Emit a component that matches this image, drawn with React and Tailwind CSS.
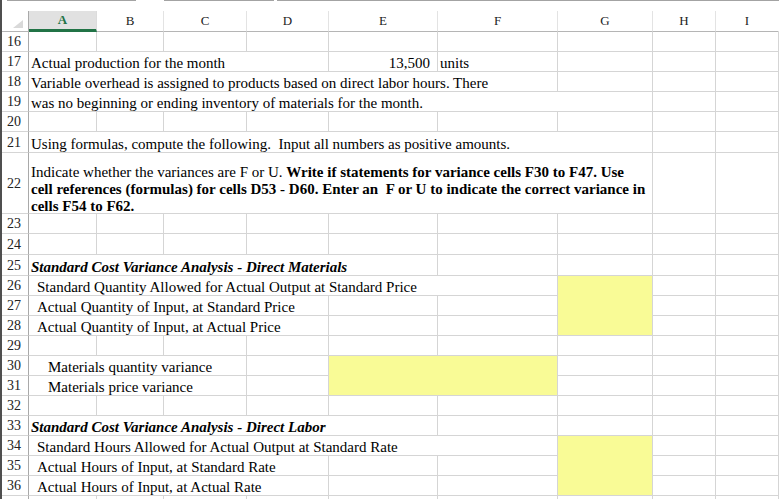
import React from "react";

const SPAN = {
  1: "",
  2: "col-span-2",
  3: "col-span-3",
  4: "col-span-4",
  5: "col-span-5",
  6: "col-span-6",
  7: "col-span-7",
};

function Cell({ span = 1, rows = 1, className = "", children }) {
  return (
    <div
      className={`${SPAN[span]} ${rows === 3 ? "row-span-3" : rows === 2 ? "row-span-2" : ""} border-r border-b border-[#d5d5d5] flex items-end min-w-0 overflow-visible whitespace-nowrap text-[15px] leading-[15px] text-black ${className}`}
    >
      {children}
    </div>
  );
}

function Label({ n }) {
  return (
    <div className="border-r border-b border-r-[#a9a9a9] border-b-[#d5d5d5] flex items-center pl-[5px] text-[14px] leading-[15px] text-[#222]">
      {n}
    </div>
  );
}

function Empties({ count }) {
  return Array.from({ length: count }).map((_, i) => <Cell key={i} />);
}

function EmptyRow({ n }) {
  return (
    <>
      <Label n={n} />
      <Empties count={9} />
    </>
  );
}

const Y = "bg-[#f9fb96]";

export default function App() {
  const headers = ["A", "B", "C", "D", "E", "F", "G", "H", "I"];
  return (
    <div className="flex w-[779px] h-[499px] overflow-hidden bg-white font-['Liberation_Serif','Times_New_Roman',serif]">
      <div className="w-[2px] shrink-0 bg-[#4f4f4f]" />
      <div className="flex flex-col w-[777px] shrink-0">
        <div className="h-[11px] shrink-0 flex items-start">
          <div className="ml-[5px] w-[129px] h-[1px] bg-[#a3a3a3]" />
          <div className="ml-[28px] w-[110px] h-[1px] bg-[#a3a3a3]" />
          <div className="ml-[3px] flex-1 h-[1px] bg-[#a3a3a3]" />
        </div>
        <div className="grid grid-cols-[27px_68px_67px_83px_82px_109px_120px_95px_63px_63px] grid-rows-[21px_20px_20px_20px_20px_20px_21px_61px_20px_21px_21px_20px_20px_20px_20px_20px_20px_20px_20px_20px_20px_20px_20px]">
          {/* header row */}
          <div className="relative border-b border-r border-b-[#b5b5b5] border-r-[#a9a9a9]">
            <svg className="absolute left-0 top-0" width="26" height="20" viewBox="0 0 26 20">
              <polygon points="21,9 21,17 11,17" fill="#d9d9d9" />
            </svg>
          </div>
          {headers.map((h, i) =>
            i === 0 ? (
              <div
                key={h}
                className="bg-[#e1e1e1] border-b-[3px] border-b-[#217346] border-r border-r-[#dcdcdc] flex items-center justify-center text-[13px] font-bold text-[#217346]"
              >
                {h}
              </div>
            ) : (
              <div
                key={h}
                className={`border-b border-b-[#b5b5b5] ${i === 8 ? "border-r border-r-[#ffffff]" : "border-r border-r-[#e3e3e3]"} flex items-center justify-center text-[13px] text-[#222]`}
              >
                {h}
              </div>
            )
          )}

          <EmptyRow n={16} />

          <Label n={17} />
          <Cell span={4} className="pl-[2px]">Actual production for the month</Cell>
          <Cell className="justify-end pr-[7px]">13,500</Cell>
          <Cell className="pl-[2px]">units</Cell>
          <Empties count={3} />

          <Label n={18} />
          <Cell span={6} className="pl-[2px]">
            Variable overhead is assigned to products based on direct labor hours. There
          </Cell>
          <Empties count={3} />

          <Label n={19} />
          <Cell span={7} className="pl-[2px]">
            was no beginning or ending inventory of materials for the month.
          </Cell>
          <Empties count={2} />

          <EmptyRow n={20} />

          <Label n={21} />
          <Cell span={7} className="pl-[2px]">
            Using formulas, compute the following.&nbsp; Input all numbers as positive amounts.
          </Cell>
          <Empties count={2} />

          <Label n={22} />
          <Cell span={7} className="pl-[2px]">
            <div className="flex flex-col leading-[17px] -mb-[2px]">
              <span>
                Indicate whether the variances are F or U.{" "}
                <b>Write if statements for variance cells F30 to F47. Use</b>
              </span>
              <b className="whitespace-pre">
                cell references (formulas) for cells D53 - D60. Enter an  F or U to indicate the correct variance in
              </b>
              <b>cells F54 to F62.</b>
            </div>
          </Cell>
          <Empties count={2} />

          <EmptyRow n={23} />
          <EmptyRow n={24} />

          <Label n={25} />
          <Cell span={5} className="pl-[2px] font-bold italic">
            Standard Cost Variance Analysis - Direct Materials
          </Cell>
          <Empties count={4} />

          <Label n={26} />
          <Cell span={6} className="pl-[8px]">
            Standard Quantity Allowed for Actual Output at Standard Price
          </Cell>
          <Cell rows={3} className={Y} />
          <Empties count={2} />

          <Label n={27} />
          <Cell span={4} className="pl-[8px]">Actual Quantity of Input, at Standard Price</Cell>
          <Empties count={4} />

          <Label n={28} />
          <Cell span={4} className="pl-[8px]">Actual Quantity of Input, at Actual Price</Cell>
          <Empties count={4} />

          <EmptyRow n={29} />

          <Label n={30} />
          <Cell span={3} className="pl-[19px]">Materials quantity variance</Cell>
          <Cell />
          <Cell span={2} rows={2} className={Y} />
          <Empties count={3} />

          <Label n={31} />
          <Cell span={3} className="pl-[19px]">Materials price variance</Cell>
          <Cell />
          <Empties count={3} />

          <EmptyRow n={32} />

          <Label n={33} />
          <Cell span={5} className="pl-[2px] font-bold italic">
            Standard Cost Variance Analysis - Direct Labor
          </Cell>
          <Empties count={4} />

          <Label n={34} />
          <Cell span={6} className="pl-[8px]">
            Standard Hours Allowed for Actual Output at Standard Rate
          </Cell>
          <Cell rows={3} className={Y} />
          <Empties count={2} />

          <Label n={35} />
          <Cell span={4} className="pl-[8px]">Actual Hours of Input, at Standard Rate</Cell>
          <Empties count={4} />

          <Label n={36} />
          <Cell span={4} className="pl-[8px]">Actual Hours of Input, at Actual Rate</Cell>
          <Empties count={4} />

          <Label n="" />
          <Empties count={9} />
        </div>
      </div>
    </div>
  );
}
